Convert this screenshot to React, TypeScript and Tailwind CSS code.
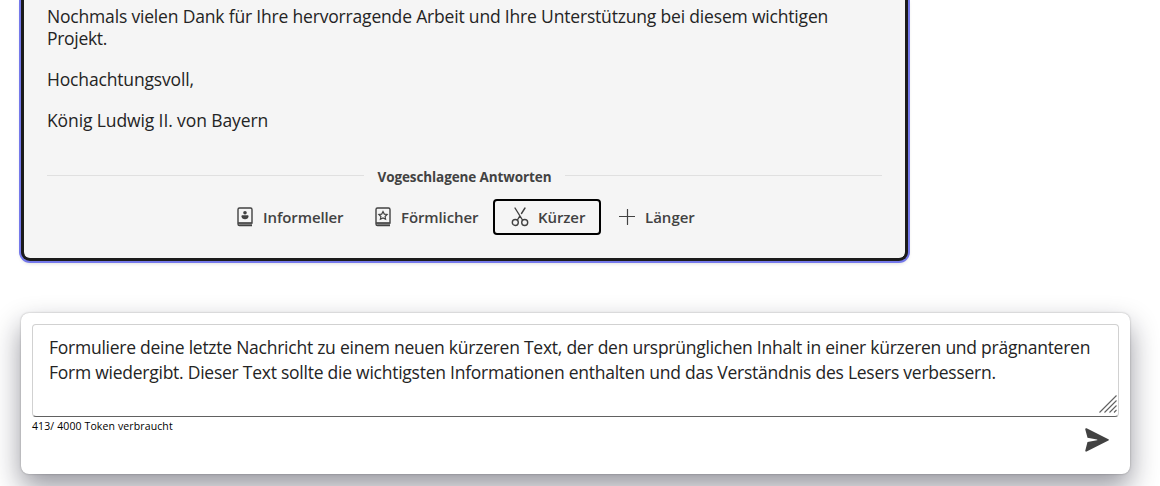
import React from 'react';

const ink = '#424242';

function Book({ children }: { children: React.ReactNode }) {
  return (
    <svg className="h-5 w-4 shrink-0" viewBox="0 0 16 20" fill="none" stroke={ink}>
      <path d="M2.500 1h11a1.500 1.500 0 0 1 1.500 1.500v13.500H1M1 16V2.500A1.500 1.500 0 0 1 2.500 1M1 15.500v1.500c0 1 .6 1.500 1.500 1.500h12.500" strokeWidth="1.4" />
      <path d="M1.500 15.500h13.500v2.800H2.500z" fill={ink} stroke="none" opacity=".6" />
      {children}
    </svg>
  );
}

export default function App() {
  return (
    <div className="flex h-[486px] w-[1160px] flex-col overflow-hidden bg-white pl-[21px] font-['Open_Sans','Noto_Sans',sans-serif] text-[#242424]">
      <section className="h-[261px] w-[887px] shrink-0 rounded-b-[9px] border-x-[3px] border-b-[3px] border-[#1b1b1b] bg-[#f5f5f5] px-[23px] pt-[5px] shadow-[0_0_0_2px_#7579eb,0_2px_4px_#00000030]">
        <div className="flex flex-col gap-[19px] text-[17.5px] leading-[22px] whitespace-nowrap">
          <p>
            <span className="block tracking-[-0.18px]">Nochmals vielen Dank für Ihre hervorragende Arbeit und Ihre Unterstützung bei diesem wichtigen</span>
            <span className="block tracking-[-0.3px]">Projekt.</span>
          </p>
          <p className="tracking-[-0.16px]">Hochachtungsvoll,</p>
          <p className="tracking-[-0.11px]">König Ludwig II. von Bayern</p>
        </div>
        <div className="mt-[36px] flex h-[20px] items-center">
          <div className="mb-[3px] h-px w-[317px] bg-[#e0e0e0]" />
          <h2 className="w-[201px] text-center text-[13.5px] leading-[18px] font-bold whitespace-nowrap text-[#424242] tracking-[-0.1px]">Vogeschlagene Antworten</h2>
          <div className="mb-[3px] h-px flex-1 bg-[#e0e0e0]" />
        </div>
        <div className="mt-[12px] flex h-9 items-center pl-[190px] text-[15px] font-semibold whitespace-nowrap text-[#424242]">
          <button className="flex w-[138px] items-center gap-[10px]">
            <Book>
              <circle cx="8" cy="5.800" r="1.800" fill={ink} stroke="none" />
              <path d="M4.500 9.200c0-.6.4-1 1-1h5c.6 0 1 .4 1 1 0 2-1.500 3-3.500 3s-3.500-1-3.500-3z" fill={ink} stroke="none" />
            </Book>
            <span className="tracking-[-0.1px]">Informeller</span>
          </button>
          <button className="flex w-[118px] items-center gap-[10px]">
            <Book>
              <path d="m8 4.500 1.300 2.600 2.800.4-2 2 .5 2.800L8 11l-2.600 1.300.5-2.800-2-2 2.800-.4z" strokeWidth="1.2" />
            </Book>
            <span className="tracking-[-0.1px]">Förmlicher</span>
          </button>
          <button className="flex h-9 w-[108px] items-center gap-[9px] rounded-[4px] border-2 border-black pl-4">
            <svg className="h-5 w-[18px] shrink-0" viewBox="0 0 18 20" fill="none" stroke={ink} strokeWidth="1.4" strokeLinecap="round">
              <path d="m4 1 7.500 12M14 1l-3.500 5.500M8.800 9.200l-2.400 3.800" />
              <circle cx="4.300" cy="15.500" r="3" /><circle cx="13.700" cy="15.500" r="3" />
            </svg>
            <span className="tracking-[-0.1px]">Kürzer</span>
          </button>
          <button className="ml-[18px] flex items-center gap-[10px]">
            <svg className="h-4 w-4 shrink-0" viewBox="0 0 16 16" fill="none" stroke={ink} strokeWidth="1.2" strokeLinecap="round"><path d="M8.500 .5v15M.5 7.500h15" /></svg>
            <span className="tracking-[0px]">Länger</span>
          </button>
        </div>
      </section>

      <section className="mt-[52px] h-[161px] w-[1109px] shrink-0 rounded-lg bg-white px-[11px] pt-[11px] shadow-[0_0_2px_#00000050,0_13px_28px_#0f0f2370]">
        <div className="relative h-[93px] rounded-[4px] border border-[#d1d1d1] border-b-[#616161] pt-[10px] pl-4 text-[17.5px] leading-[25px] whitespace-nowrap">
          <span className="block tracking-[-0.25px]">Formuliere deine letzte Nachricht zu einem neuen kürzeren Text, der den ursprünglichen Inhalt in einer kürzeren und prägnanteren</span>
          <span className="block tracking-[-0.248px]">Form wiedergibt. Dieser Text sollte die wichtigsten Informationen enthalten und das Verständnis des Lesers verbessern.</span>
          <svg className="absolute right-[1px] bottom-[3px] h-[18px] w-[18px]" viewBox="0 0 18 18" stroke="#616161" strokeWidth="1.1">
            <path d="M.5 17.500 17.500.5M5.500 17.500l12-12M10.500 17.500l7-7M15 17.500l2.500-2.500" />
          </svg>
        </div>
        <div className="flex justify-between">
          <span className="mt-[2px] text-[10.500px] leading-[14px] tracking-[0.12px] whitespace-nowrap text-black">413/ 4000 Token verbraucht</span>
          <button className="mt-[11px] mr-[10px]" aria-label="Senden">
            <svg className="h-6 w-6" viewBox="0 0 24 24" fill="#424242"><path d="M1.600.3 23.400 11.200c.7.4.7 1 0 1.400L1.600 23.500c-.9.4-1.600-.2-1.300-1.100L2.500 14l9.500-1.700c.5-.1.5-.7 0-.8L2.500 9.700.3 1.400C0 .5.8-.1 1.600.3z" /></svg>
          </button>
        </div>
      </section>
    </div>
  );
}
